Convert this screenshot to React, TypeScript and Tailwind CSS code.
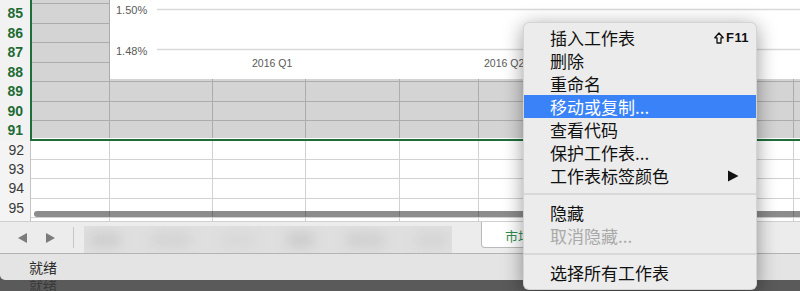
import { FC } from 'react'

const rows = [84, 85, 86, 87, 88, 89, 90, 91, 92, 93, 94, 95, 96]
const colWidths = ['w-[79px]', 'w-[103px]', 'w-[93px]', 'w-[94px]', 'w-[79px]', 'w-[102px]', 'w-[105px]', 'w-[108px]', 'w-[120px]']

const GridRow: FC<{ n: number }> = ({ n }) => {
  const selected = n <= 91
  return (
    <div className="flex h-[19.45px]">
      <div
        className={
          selected
            ? 'w-[31px] shrink-0 bg-[#f2f2f2] border-r border-[#c4c4c4] text-right pr-[7px] text-[14px] leading-[19px] font-bold text-[#1e6b34]'
            : 'w-[31px] shrink-0 bg-[#f4f4f4] border-r border-[#c4c4c4] text-right pr-[6px] text-[14px] leading-[19px] text-[#3a3a3a]'
        }
      >
        {n}
      </div>
      {colWidths.map((w, i) => (
        <div
          key={i}
          className={
            selected
              ? `${w} shrink-0 bg-[#d4d4d4] border-r border-b border-[#acacac]`
              : `${w} shrink-0 bg-white border-r border-b border-[#d2d2d2]`
          }
        />
      ))}
    </div>
  )
}

const Chart = () => (
  <div className="absolute left-[110px] top-0 w-[700px] h-[79px] bg-white">
    <svg width="700" height="79" className="block">
      <g fontFamily="'Liberation Sans', Arial, sans-serif" fill="#595959">
        <text x="6" y="14" fontSize="11">1.50%</text>
        <text x="6" y="54.6" fontSize="11">1.48%</text>
        <text x="142" y="67" fontSize="10.5">2016 Q1</text>
        <text x="374" y="67" fontSize="10.5">2016 Q2</text>
      </g>
      <line x1="47" y1="9.5" x2="700" y2="9.5" stroke="#d9d9d9" strokeWidth="1.5" />
      <line x1="47" y1="49.5" x2="700" y2="49.5" stroke="#d9d9d9" strokeWidth="1.5" />
    </svg>
  </div>
)

interface IItem {
  label: string
  active?: boolean
  disabled?: boolean
  shortcut?: boolean
  submenu?: boolean
}

const MenuItem: FC<IItem> = ({ label, active, disabled, shortcut, submenu }) => (
  <div
    className={
      'flex items-center h-[23px] pl-[26px] ' +
      (active ? 'bg-[#3a82f7] text-white' : disabled ? 'text-[#a9a9a9]' : 'text-[#111]')
    }
  >
    <span className="flex-1 text-[17px] leading-[23px]">{label}</span>
    {shortcut && (
      <span className="flex items-center gap-[2px] pr-[7px] text-[#111]">
        <svg width="10" height="12" viewBox="0 0 10 12">
          <path d="M5 1 L9.2 5.8 H7 V11 H3 V5.8 H0.8 Z" fill="none" stroke="#111" strokeWidth="1.3" strokeLinejoin="round" />
        </svg>
        <span className="font-['Liberation_Sans',sans-serif] font-bold text-[13px] tracking-[0.4px]">F11</span>
      </span>
    )}
    {submenu && (
      <svg width="12" height="12" viewBox="0 0 12 12" className="mr-[17px]">
        <path d="M1 0.5 L11.5 6 L1 11.5 Z" fill="#111" />
      </svg>
    )}
  </div>
)

const Separator = () => (
  <div className="h-[14px] flex items-center">
    <div className="h-[2px] w-full bg-[#d8d8d8]" />
  </div>
)

const ContextMenu = () => (
  <div className="absolute left-[523px] top-[22px] w-[234px] h-[268px] rounded-[6px] bg-[#ececec] border border-black/10 shadow-[0_4px_20px_rgba(0,0,0,0.4)] pt-[3px] font-['Noto_Sans_CJK_SC',sans-serif] overflow-hidden">
    <MenuItem label="插入工作表" shortcut />
    <MenuItem label="删除" />
    <MenuItem label="重命名" />
    <MenuItem label="移动或复制..." active />
    <MenuItem label="查看代码" />
    <MenuItem label="保护工作表..." />
    <MenuItem label="工作表标签颜色" submenu />
    <Separator />
    <MenuItem label="隐藏" />
    <MenuItem label="取消隐藏..." disabled />
    <Separator />
    <MenuItem label="选择所有工作表" />
  </div>
)

const App = () => {
  return (
    <div className="relative w-[800px] h-[291px] overflow-hidden bg-[#595959] font-['Liberation_Sans','Noto_Sans_CJK_SC',sans-serif]">
      {/* sheet grid */}
      <div className="relative h-[221px] overflow-hidden bg-white">
        <div className="mt-[-15px]">
          {rows.map((n) => (
            <GridRow key={n} n={n} />
          ))}
        </div>
        <Chart />
        {/* selection */}
        <div className="absolute left-[30px] top-[-5px] w-[800px] h-[146px] border-l-2 border-b-2 border-[#1f6e3a]">
          <div className="absolute left-0 right-0 bottom-0 h-px bg-white" />
        </div>
        {/* horizontal scrollbar */}
        <div className="absolute left-[34px] top-[211px] h-[6px] w-[900px] rounded-full bg-black/45" />
      </div>

      {/* sheet tabs */}
      <div className="flex h-[33px] bg-[#ececec] border-t border-b border-t-[#d0d0d0] border-b-[#b3b3b3]">
        <div className="flex items-center w-[73px] pl-[18px] gap-[19px]">
          <svg width="9" height="10" viewBox="0 0 9 10">
            <path d="M9 0 L0 5 L9 10 Z" fill="#7b7b7b" />
          </svg>
          <svg width="9" height="10" viewBox="0 0 9 10">
            <path d="M0 0 L9 5 L0 10 Z" fill="#7b7b7b" />
          </svg>
        </div>
        <div className="self-center w-px h-[21px] bg-[#c6c6c6]" />
        <div className="ml-[10px] mt-[4px] w-[368px] h-[27px] bg-[#dfdfdf] overflow-hidden flex items-center gap-[30px] px-[4px]">
          <span className="w-[40px] h-[14px] rounded-full bg-[#cdcdcd] blur-[6px]" />
          <span className="w-[50px] h-[14px] rounded-full bg-[#d3d3d3] blur-[6px]" />
          <span className="w-[40px] h-[14px] rounded-full bg-[#d8d8d8] blur-[6px]" />
          <span className="w-[36px] h-[14px] rounded-full bg-[#cbcbcb] blur-[6px]" />
          <span className="w-[48px] h-[14px] rounded-full bg-[#cfcfcf] blur-[6px]" />
          <span className="w-[40px] h-[14px] rounded-full bg-[#d4d4d4] blur-[6px]" />
        </div>
        <div className="ml-[29px] h-[26px] w-[140px] bg-white border-l border-r border-b border-[#b9b9b9] rounded-b-[4px] pl-[23px] pt-[4px] text-[13px] leading-[20px] text-[#2f8a4f] font-['Noto_Sans_CJK_SC',sans-serif]">
          市场数据
        </div>
      </div>

      {/* status bar */}
      <div className="h-[26px] bg-[#e4e4e4] rounded-bl-[5px] pl-[29px] text-[14px] leading-[26px] text-[#2b2b2b] font-['Noto_Sans_CJK_SC',sans-serif]">
        就绪
      </div>
      <div className="h-[11px] overflow-hidden pl-[29px] bg-[#5a5a5a]">
        <div className="mt-[-8px] text-[14px] leading-[26px] text-[#3a3a3a] font-['Noto_Sans_CJK_SC',sans-serif]">
          就绪
        </div>
      </div>

      <ContextMenu />
    </div>
  )
}

export default App
